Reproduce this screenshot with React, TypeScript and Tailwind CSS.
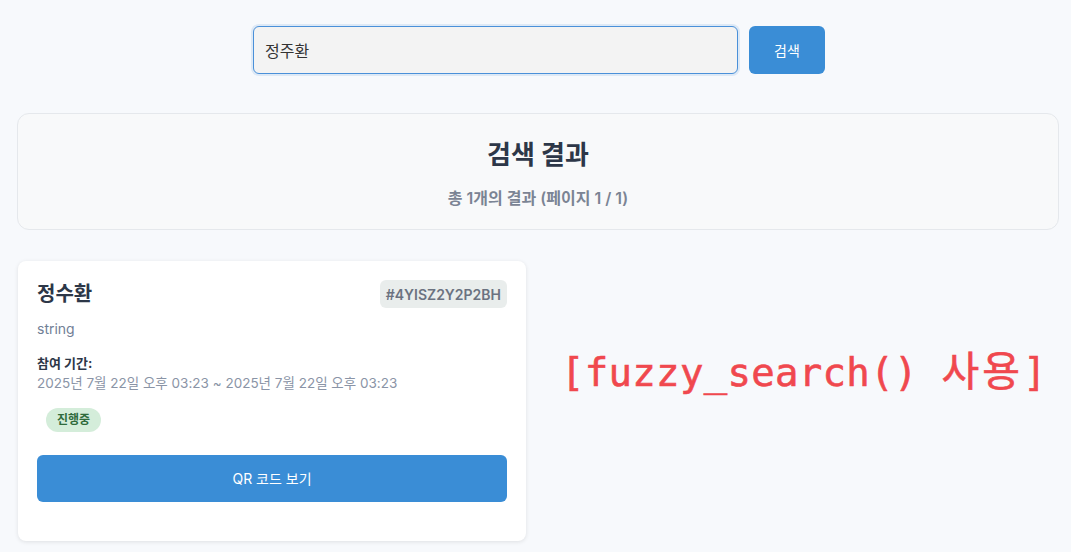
import React from "react";

const sans = "font-['Inter','Noto_Sans_CJK_KR',sans-serif]";

function ResultCard() {
  return (
    <div className="w-[508px] bg-white rounded-lg shadow-[0_1px_4px_rgba(0,0,0,0.1)] px-[19px] pt-[19px] pb-[39px]">
      <div className="flex items-center justify-between h-[28px]">
        <h3 className="text-[20px] font-semibold text-[#2d3748]">정수환</h3>
        <span className="h-[28px] px-[6px] flex items-center rounded-md bg-[#e9edec] text-[14px] font-semibold text-[#6b7280]">
          #4YISZ2Y2P2BH
        </span>
      </div>
      <p className="mt-[10px] text-[14px] leading-[21px] text-[#718096]">string</p>
      <p className="mt-[14px] text-[13px] leading-[20px] font-bold text-[#2d3748]">참여 기간:</p>
      <p className="text-[13.5px] leading-[21px] text-[#8a94a6]">
        2025년 7월 22일 오후 03:23 ~ 2025년 7월 22일 오후 03:23
      </p>
      <div className="mt-[12px] ml-[9px]">
        <span className="inline-flex items-center h-[24px] px-[11px] rounded-full bg-[#d4edda] text-[12px] font-semibold text-[#2f6b3c]">
          진행중
        </span>
      </div>
      <button className="mt-[23px] w-full h-[47px] rounded-md bg-[#3a8dd6] text-white text-[14px]">
        QR 코드 보기
      </button>
    </div>
  );
}

export default function App() {
  return (
    <div className={`min-h-screen bg-[#f7f9fc] ${sans}`}>
      <div className="flex justify-center pt-[26px] pl-[7px] gap-[11px]">
        <input
          readOnly
          value="정주환"
          className="w-[485px] h-[48px] px-[11px] rounded-md bg-[#f3f3f3] border-[1.5px] border-[#4a90d9] shadow-[0_0_0_2px_rgba(74,144,217,0.15)] text-[16px] text-[#333] outline-none"
        />
        <button className="w-[76px] h-[48px] rounded-md bg-[#3a8dd6] text-white text-[14px]">
          검색
        </button>
      </div>

      <div className="mt-[39px] ml-[17px] mr-[12px] h-[117px] rounded-xl border border-[#e5e8ec] bg-[#f8f9fa] flex flex-col items-center pt-[22px]">
        <h2 className="text-[26px] leading-[38px] font-bold text-[#2d3748]">검색 결과</h2>
        <p className="mt-[13px] text-[16px] leading-[22px] font-semibold text-[#7b8494]">
          총 1개의 결과 (페이지 1 / 1)
        </p>
      </div>

      <div className="flex mt-[31px] ml-[18px]">
        <ResultCard />
        <p className="ml-[35px] mt-[88px] text-[39px] leading-[46px] tracking-[0.3px] text-[#f0484e] font-['DejaVu_Sans_Mono','Noto_Sans_CJK_KR',monospace] whitespace-nowrap [-webkit-text-stroke:0.6px_#f0484e]">
          [fuzzy_search() <span className="text-[41px] tracking-[3px]">사용</span>]
        </p>
      </div>
    </div>
  );
}
